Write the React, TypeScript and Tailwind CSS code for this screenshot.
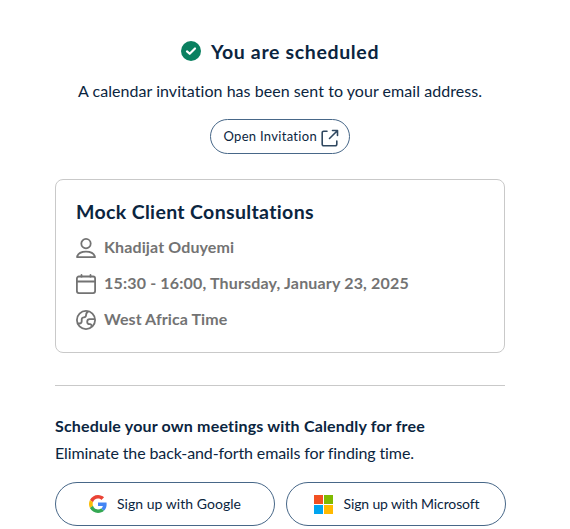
import type { ReactNode } from "react";

function CheckIcon() {
  return (
    <svg width="20" height="20" viewBox="0 0 20 20" className="shrink-0">
      <circle cx="10" cy="10" r="10" fill="#0a8060" />
      <path d="M6 10.400 8.700 12.800 14 7.500" fill="none" stroke="#fff" strokeWidth="2.2" strokeLinecap="round" strokeLinejoin="round" />
    </svg>
  );
}

function ExternalIcon() {
  return (
    <svg width="18" height="18" viewBox="0 0 18 18" className="shrink-0" fill="none" stroke="#304860" strokeWidth="1.6" strokeLinecap="round" strokeLinejoin="round">
      <path d="M6 2.200H2.700A1.500 1.500 0 0 0 1.200 3.700v11.600a1.500 1.500 0 0 0 1.500 1.500h11.600a1.500 1.500 0 0 0 1.500-1.500V12M11.500 1.500h5v5M16.300 1.700 8.500 9.500" />
    </svg>
  );
}

function PersonIcon() {
  return (
    <svg width="20" height="20" viewBox="0 0 20 20" fill="none" stroke="#737373" strokeWidth="1.8" strokeLinejoin="round">
      <circle cx="10" cy="5.6" r="4.7" />
      <path d="M1 19.100c.8-3.700 4.400-5.500 9-5.500s8.200 1.800 9 5.500Z" />
    </svg>
  );
}

function CalendarIcon() {
  return (
    <svg width="20" height="20" viewBox="0 0 20 20" fill="none" stroke="#737373" strokeWidth="1.8" strokeLinecap="round">
      <rect x=".9" y="2.500" width="18.200" height="16.600" rx="2" />
      <path d="M1 7.500h18M5.500.9v1.800M14.500.9v1.800" />
    </svg>
  );
}

function GlobeIcon() {
  return (
    <svg width="20" height="20" viewBox="0 0 20 20" fill="none" stroke="#737373" strokeWidth="1.8" strokeLinejoin="round">
      <circle cx="10" cy="10" r="9.1" />
      <path d="M1.500 13.500h2a2.200 2.200 0 0 0 2.200-2.200V9.500a2.200 2.200 0 0 1 2.200-2.200 2.200 2.200 0 0 0 2.200-2.200c0-2 .8-3 2.300-3.700M18.900 9.200h-5.200a2.500 2.500 0 0 0 0 5h.5a1.300 1.300 0 0 1 1.300 1.300v1.500" />
    </svg>
  );
}

function GoogleIcon() {
  return (
    <svg width="18" height="18" viewBox="0 0 48 48" className="shrink-0">
      <path fill="#EA4335" d="M24 9.5c3.540 0 6.710 1.220 9.210 3.600l6.850-6.850C35.900 2.380 30.470 0 24 0 14.620 0 6.510 5.380 2.560 13.220l7.980 6.190C12.430 13.720 17.740 9.500 24 9.500z" />
      <path fill="#4285F4" d="M46.980 24.550c0-1.570-.15-3.090-.38-4.550H24v9.020h12.940c-.58 2.960-2.260 5.480-4.780 7.180l7.730 6c4.510-4.180 7.090-10.360 7.090-17.650z" />
      <path fill="#FBBC05" d="M10.530 28.590c-.48-1.450-.76-2.990-.76-4.590s.27-3.140.76-4.590l-7.980-6.190C.92 16.460 0 20.120 0 24c0 3.880.92 7.540 2.560 10.780l7.970-6.190z" />
      <path fill="#34A853" d="M24 48c6.480 0 11.930-2.130 15.890-5.810l-7.730-6c-2.150 1.450-4.920 2.300-8.160 2.300-6.260 0-11.570-4.220-13.470-9.910l-7.980 6.190C6.510 42.620 14.620 48 24 48z" />
    </svg>
  );
}

function MicrosoftIcon() {
  return (
    <svg width="19" height="19" viewBox="0 0 19 19" className="shrink-0">
      <path fill="#f25022" d="M0 0h9v9H0z" />
      <path fill="#7fba00" d="M10 0h9v9h-9z" />
      <path fill="#00a4ef" d="M0 10h9v9H0z" />
      <path fill="#ffb900" d="M10 10h9v9h-9z" />
    </svg>
  );
}

function Detail({ icon, children }: { icon: ReactNode; children: ReactNode }) {
  return (
    <li className="flex h-5 items-center gap-2">
      {icon}
      <span className="pb-0.5">{children}</span>
    </li>
  );
}

export default function App() {
  return (
    <main className="flex h-[529px] w-[570px] flex-col overflow-hidden bg-white pl-[55px] font-['Lato',sans-serif] whitespace-nowrap text-[#0b2540]">
      <header className="flex w-[450px] flex-col items-center pt-[37px]">
        <div className="flex h-7 items-center gap-2.5">
          <CheckIcon />
          <h1 className="pt-0.5 text-[19.5px] leading-7 font-bold tracking-[0.65px]">You are scheduled</h1>
        </div>
        <p className="mt-3.5 text-[16px] leading-6 tracking-[0.05px]">A calendar invitation has been sent to your email address.</p>
        <button className="mt-4 flex h-[35px] w-[140px] items-center gap-1 rounded-full border border-[#476788] pl-[12.5px] text-[13px]">
          <span className="tracking-[0.3px]">Open Invitation</span>
          <span className="pt-0.5"><ExternalIcon /></span>
        </button>
      </header>
      <section className="mt-[25px] h-[174px] w-[450px] rounded-lg border border-[#c9c9c9] px-5 pt-[18px]">
        <h2 className="text-[19.5px] leading-7 font-bold tracking-[0.35px]">Mock Client Consultations</h2>
        <ul className="mt-3 flex flex-col gap-4 text-[16px] font-bold text-[#737373]">
          <Detail icon={<PersonIcon />}><span className="tracking-[0.12px]">Khadijat Oduyemi</span></Detail>
          <Detail icon={<CalendarIcon />}><span className="tracking-[0.17px]">15:30 - 16:00, Thursday, January 23, 2025</span></Detail>
          <Detail icon={<GlobeIcon />}><span className="tracking-[0.08px]">West Africa Time</span></Detail>
        </ul>
      </section>
      <hr className="mt-8 w-[450px] border-[#c9c9c9]" />
      <h3 className="mt-7 text-[16px] leading-6 font-bold tracking-[0.18px]">Schedule your own meetings with Calendly for free</h3>
      <p className="mt-[3px] text-[16px] leading-6 tracking-[-0.11px]">Eliminate the back-and-forth emails for finding time.</p>
      <div className="mt-[17px] flex gap-[11px] text-[14px]">
        <button className="flex h-11 w-[220px] items-center gap-[10px] rounded-full border border-[#476788] pl-[33px]">
          <GoogleIcon />
          <span className="pb-px tracking-[0.04px]">Sign up with Google</span>
        </button>
        <button className="flex h-11 w-[220px] items-center gap-[10.5px] rounded-full border border-[#476788] pl-[27px]">
          <MicrosoftIcon />
          <span className="pb-px tracking-[-0.13px]">Sign up with Microsoft</span>
        </button>
      </div>
    </main>
  );
}
